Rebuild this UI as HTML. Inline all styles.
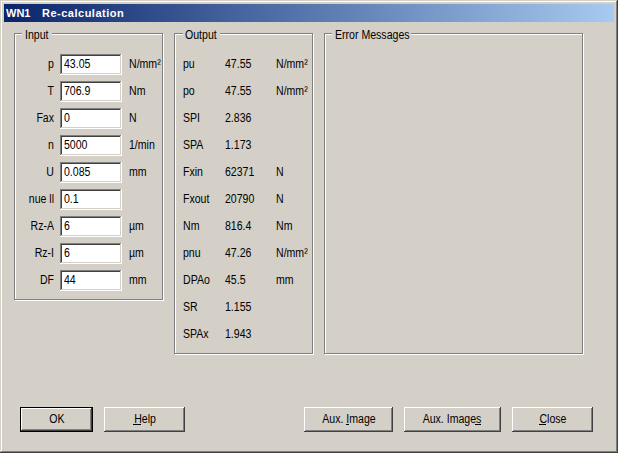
<!DOCTYPE html>
<html><head><meta charset="utf-8">
<style>
*{box-sizing:border-box;margin:0;padding:0}
html,body{width:618px;height:453px;overflow:hidden;background:#d4d0c8}
body{position:relative;font-family:"Liberation Sans",sans-serif;font-size:12px;color:#000}
.a{position:absolute}
.t{position:absolute;white-space:nowrap;line-height:13px;height:13px;transform:scaleX(0.88);transform-origin:0 0}
.tr{text-align:right;transform-origin:100% 0}
.tc{text-align:center;transform-origin:50% 0}
.tb{position:absolute;white-space:nowrap;line-height:13px;height:13px;color:#fff;font-weight:bold;font-size:11px}
.title{left:4px;top:4px;width:610px;height:18px;background:linear-gradient(to right,#0a246a,#a6caf0)}
.gw{border:1px solid #fff}
.gg{border:1px solid #808080}
</style></head><body>
<div class="a" style="left:0px;top:0px;width:617px;height:1px;background:#d4d0c8"></div><div class="a" style="left:0px;top:0px;width:1px;height:452px;background:#d4d0c8"></div><div class="a" style="left:0px;top:452px;width:618px;height:1px;background:#404040"></div><div class="a" style="left:617px;top:0px;width:1px;height:453px;background:#404040"></div>
<div class="a" style="left:1px;top:1px;width:615px;height:1px;background:#fff"></div><div class="a" style="left:1px;top:1px;width:1px;height:450px;background:#fff"></div><div class="a" style="left:1px;top:451px;width:616px;height:1px;background:#808080"></div><div class="a" style="left:616px;top:1px;width:1px;height:451px;background:#808080"></div>
<div class="a title"></div>
<div class="a gw" style="left:15px;top:34px;width:149px;height:267px"></div><div class="a gg" style="left:14px;top:33px;width:149px;height:267px"></div>
<div class="a" style="left:22px;top:28px;width:30px;height:13px;background:#d4d0c8"></div>
<div class="a gw" style="left:175px;top:34px;width:139px;height:321px"></div><div class="a gg" style="left:174px;top:33px;width:139px;height:321px"></div>
<div class="a" style="left:183px;top:28px;width:37px;height:13px;background:#d4d0c8"></div>
<div class="a gw" style="left:325px;top:34px;width:259px;height:321px"></div><div class="a gg" style="left:324px;top:33px;width:259px;height:321px"></div>
<div class="a" style="left:332px;top:28px;width:79px;height:13px;background:#d4d0c8"></div>
<div class="a" style="left:62px;top:56px;width:58px;height:17px;background:#fff"></div><div class="a" style="left:60px;top:54px;width:61px;height:1px;background:#808080"></div><div class="a" style="left:60px;top:54px;width:1px;height:20px;background:#808080"></div><div class="a" style="left:60px;top:74px;width:62px;height:1px;background:#fff"></div><div class="a" style="left:121px;top:54px;width:1px;height:21px;background:#fff"></div><div class="a" style="left:61px;top:55px;width:59px;height:1px;background:#404040"></div><div class="a" style="left:61px;top:55px;width:1px;height:18px;background:#404040"></div><div class="a" style="left:61px;top:73px;width:60px;height:1px;background:#d4d0c8"></div><div class="a" style="left:120px;top:55px;width:1px;height:19px;background:#d4d0c8"></div>
<div class="a" style="left:62px;top:83px;width:58px;height:17px;background:#fff"></div><div class="a" style="left:60px;top:81px;width:61px;height:1px;background:#808080"></div><div class="a" style="left:60px;top:81px;width:1px;height:20px;background:#808080"></div><div class="a" style="left:60px;top:101px;width:62px;height:1px;background:#fff"></div><div class="a" style="left:121px;top:81px;width:1px;height:21px;background:#fff"></div><div class="a" style="left:61px;top:82px;width:59px;height:1px;background:#404040"></div><div class="a" style="left:61px;top:82px;width:1px;height:18px;background:#404040"></div><div class="a" style="left:61px;top:100px;width:60px;height:1px;background:#d4d0c8"></div><div class="a" style="left:120px;top:82px;width:1px;height:19px;background:#d4d0c8"></div>
<div class="a" style="left:62px;top:110px;width:58px;height:17px;background:#fff"></div><div class="a" style="left:60px;top:108px;width:61px;height:1px;background:#808080"></div><div class="a" style="left:60px;top:108px;width:1px;height:20px;background:#808080"></div><div class="a" style="left:60px;top:128px;width:62px;height:1px;background:#fff"></div><div class="a" style="left:121px;top:108px;width:1px;height:21px;background:#fff"></div><div class="a" style="left:61px;top:109px;width:59px;height:1px;background:#404040"></div><div class="a" style="left:61px;top:109px;width:1px;height:18px;background:#404040"></div><div class="a" style="left:61px;top:127px;width:60px;height:1px;background:#d4d0c8"></div><div class="a" style="left:120px;top:109px;width:1px;height:19px;background:#d4d0c8"></div>
<div class="a" style="left:62px;top:137px;width:58px;height:17px;background:#fff"></div><div class="a" style="left:60px;top:135px;width:61px;height:1px;background:#808080"></div><div class="a" style="left:60px;top:135px;width:1px;height:20px;background:#808080"></div><div class="a" style="left:60px;top:155px;width:62px;height:1px;background:#fff"></div><div class="a" style="left:121px;top:135px;width:1px;height:21px;background:#fff"></div><div class="a" style="left:61px;top:136px;width:59px;height:1px;background:#404040"></div><div class="a" style="left:61px;top:136px;width:1px;height:18px;background:#404040"></div><div class="a" style="left:61px;top:154px;width:60px;height:1px;background:#d4d0c8"></div><div class="a" style="left:120px;top:136px;width:1px;height:19px;background:#d4d0c8"></div>
<div class="a" style="left:62px;top:164px;width:58px;height:17px;background:#fff"></div><div class="a" style="left:60px;top:162px;width:61px;height:1px;background:#808080"></div><div class="a" style="left:60px;top:162px;width:1px;height:20px;background:#808080"></div><div class="a" style="left:60px;top:182px;width:62px;height:1px;background:#fff"></div><div class="a" style="left:121px;top:162px;width:1px;height:21px;background:#fff"></div><div class="a" style="left:61px;top:163px;width:59px;height:1px;background:#404040"></div><div class="a" style="left:61px;top:163px;width:1px;height:18px;background:#404040"></div><div class="a" style="left:61px;top:181px;width:60px;height:1px;background:#d4d0c8"></div><div class="a" style="left:120px;top:163px;width:1px;height:19px;background:#d4d0c8"></div>
<div class="a" style="left:62px;top:191px;width:58px;height:17px;background:#fff"></div><div class="a" style="left:60px;top:189px;width:61px;height:1px;background:#808080"></div><div class="a" style="left:60px;top:189px;width:1px;height:20px;background:#808080"></div><div class="a" style="left:60px;top:209px;width:62px;height:1px;background:#fff"></div><div class="a" style="left:121px;top:189px;width:1px;height:21px;background:#fff"></div><div class="a" style="left:61px;top:190px;width:59px;height:1px;background:#404040"></div><div class="a" style="left:61px;top:190px;width:1px;height:18px;background:#404040"></div><div class="a" style="left:61px;top:208px;width:60px;height:1px;background:#d4d0c8"></div><div class="a" style="left:120px;top:190px;width:1px;height:19px;background:#d4d0c8"></div>
<div class="a" style="left:62px;top:218px;width:58px;height:17px;background:#fff"></div><div class="a" style="left:60px;top:216px;width:61px;height:1px;background:#808080"></div><div class="a" style="left:60px;top:216px;width:1px;height:20px;background:#808080"></div><div class="a" style="left:60px;top:236px;width:62px;height:1px;background:#fff"></div><div class="a" style="left:121px;top:216px;width:1px;height:21px;background:#fff"></div><div class="a" style="left:61px;top:217px;width:59px;height:1px;background:#404040"></div><div class="a" style="left:61px;top:217px;width:1px;height:18px;background:#404040"></div><div class="a" style="left:61px;top:235px;width:60px;height:1px;background:#d4d0c8"></div><div class="a" style="left:120px;top:217px;width:1px;height:19px;background:#d4d0c8"></div>
<div class="a" style="left:62px;top:245px;width:58px;height:17px;background:#fff"></div><div class="a" style="left:60px;top:243px;width:61px;height:1px;background:#808080"></div><div class="a" style="left:60px;top:243px;width:1px;height:20px;background:#808080"></div><div class="a" style="left:60px;top:263px;width:62px;height:1px;background:#fff"></div><div class="a" style="left:121px;top:243px;width:1px;height:21px;background:#fff"></div><div class="a" style="left:61px;top:244px;width:59px;height:1px;background:#404040"></div><div class="a" style="left:61px;top:244px;width:1px;height:18px;background:#404040"></div><div class="a" style="left:61px;top:262px;width:60px;height:1px;background:#d4d0c8"></div><div class="a" style="left:120px;top:244px;width:1px;height:19px;background:#d4d0c8"></div>
<div class="a" style="left:62px;top:272px;width:58px;height:17px;background:#fff"></div><div class="a" style="left:60px;top:270px;width:61px;height:1px;background:#808080"></div><div class="a" style="left:60px;top:270px;width:1px;height:20px;background:#808080"></div><div class="a" style="left:60px;top:290px;width:62px;height:1px;background:#fff"></div><div class="a" style="left:121px;top:270px;width:1px;height:21px;background:#fff"></div><div class="a" style="left:61px;top:271px;width:59px;height:1px;background:#404040"></div><div class="a" style="left:61px;top:271px;width:1px;height:18px;background:#404040"></div><div class="a" style="left:61px;top:289px;width:60px;height:1px;background:#d4d0c8"></div><div class="a" style="left:120px;top:271px;width:1px;height:19px;background:#d4d0c8"></div>
<div class="a" style="left:20px;top:407px;width:72px;height:1px;background:#000"></div><div class="a" style="left:20px;top:407px;width:1px;height:24px;background:#000"></div><div class="a" style="left:20px;top:431px;width:73px;height:1px;background:#000"></div><div class="a" style="left:92px;top:407px;width:1px;height:25px;background:#000"></div><div class="a" style="left:21px;top:408px;width:70px;height:1px;background:#fff"></div><div class="a" style="left:21px;top:408px;width:1px;height:22px;background:#fff"></div><div class="a" style="left:21px;top:430px;width:71px;height:1px;background:#404040"></div><div class="a" style="left:91px;top:408px;width:1px;height:23px;background:#404040"></div><div class="a" style="left:22px;top:409px;width:68px;height:1px;background:#d4d0c8"></div><div class="a" style="left:22px;top:409px;width:1px;height:20px;background:#d4d0c8"></div><div class="a" style="left:22px;top:429px;width:69px;height:1px;background:#808080"></div><div class="a" style="left:90px;top:409px;width:1px;height:21px;background:#808080"></div>
<div class="a" style="left:104px;top:407px;width:80px;height:1px;background:#fff"></div><div class="a" style="left:104px;top:407px;width:1px;height:24px;background:#fff"></div><div class="a" style="left:104px;top:431px;width:81px;height:1px;background:#404040"></div><div class="a" style="left:184px;top:407px;width:1px;height:25px;background:#404040"></div><div class="a" style="left:105px;top:408px;width:78px;height:1px;background:#d4d0c8"></div><div class="a" style="left:105px;top:408px;width:1px;height:22px;background:#d4d0c8"></div><div class="a" style="left:105px;top:430px;width:79px;height:1px;background:#808080"></div><div class="a" style="left:183px;top:408px;width:1px;height:23px;background:#808080"></div>
<div class="a" style="left:133px;top:424px;width:8px;height:1px;background:#000"></div>
<div class="a" style="left:304px;top:407px;width:88px;height:1px;background:#fff"></div><div class="a" style="left:304px;top:407px;width:1px;height:24px;background:#fff"></div><div class="a" style="left:304px;top:431px;width:89px;height:1px;background:#404040"></div><div class="a" style="left:392px;top:407px;width:1px;height:25px;background:#404040"></div><div class="a" style="left:305px;top:408px;width:86px;height:1px;background:#d4d0c8"></div><div class="a" style="left:305px;top:408px;width:1px;height:22px;background:#d4d0c8"></div><div class="a" style="left:305px;top:430px;width:87px;height:1px;background:#808080"></div><div class="a" style="left:391px;top:408px;width:1px;height:23px;background:#808080"></div>
<div class="a" style="left:346px;top:424px;width:3px;height:1px;background:#000"></div>
<div class="a" style="left:404px;top:407px;width:96px;height:1px;background:#fff"></div><div class="a" style="left:404px;top:407px;width:1px;height:24px;background:#fff"></div><div class="a" style="left:404px;top:431px;width:97px;height:1px;background:#404040"></div><div class="a" style="left:500px;top:407px;width:1px;height:25px;background:#404040"></div><div class="a" style="left:405px;top:408px;width:94px;height:1px;background:#d4d0c8"></div><div class="a" style="left:405px;top:408px;width:1px;height:22px;background:#d4d0c8"></div><div class="a" style="left:405px;top:430px;width:95px;height:1px;background:#808080"></div><div class="a" style="left:499px;top:408px;width:1px;height:23px;background:#808080"></div>
<div class="a" style="left:475px;top:424px;width:6px;height:1px;background:#000"></div>
<div class="a" style="left:512px;top:407px;width:80px;height:1px;background:#fff"></div><div class="a" style="left:512px;top:407px;width:1px;height:24px;background:#fff"></div><div class="a" style="left:512px;top:431px;width:81px;height:1px;background:#404040"></div><div class="a" style="left:592px;top:407px;width:1px;height:25px;background:#404040"></div><div class="a" style="left:513px;top:408px;width:78px;height:1px;background:#d4d0c8"></div><div class="a" style="left:513px;top:408px;width:1px;height:22px;background:#d4d0c8"></div><div class="a" style="left:513px;top:430px;width:79px;height:1px;background:#808080"></div><div class="a" style="left:591px;top:408px;width:1px;height:23px;background:#808080"></div>
<div class="a" style="left:539px;top:424px;width:7px;height:1px;background:#000"></div>
<div class="tb" style="left:6px;top:7px">WN1</div>
<div class="tb" style="left:42px;top:7px;letter-spacing:0.5px">Re-calculation</div>
<div class="t " style="left:25px;top:29px;">Input</div>
<div class="t " style="left:184.5px;top:29px;">Output</div>
<div class="t " style="left:335.3px;top:29px;">Error Messages</div>
<div class="t tr " style="left:-146px;top:58px;width:200px;">p</div>
<div class="t " style="left:64px;top:58px;">43.05</div>
<div class="t " style="left:129px;top:58px;">N/mm²</div>
<div class="t tr " style="left:-146px;top:85px;width:200px;">T</div>
<div class="t " style="left:64px;top:85px;">706.9</div>
<div class="t " style="left:129px;top:85px;">Nm</div>
<div class="t tr " style="left:-146px;top:112px;width:200px;">Fax</div>
<div class="t " style="left:64px;top:112px;">0</div>
<div class="t " style="left:129px;top:112px;">N</div>
<div class="t tr " style="left:-146px;top:139px;width:200px;">n</div>
<div class="t " style="left:64px;top:139px;">5000</div>
<div class="t " style="left:129px;top:139px;">1/min</div>
<div class="t tr " style="left:-146px;top:166px;width:200px;">U</div>
<div class="t " style="left:64px;top:166px;">0.085</div>
<div class="t " style="left:129px;top:166px;">mm</div>
<div class="t tr " style="left:-146px;top:193px;width:200px;">nue ll</div>
<div class="t " style="left:64px;top:193px;">0.1</div>
<div class="t tr " style="left:-146px;top:220px;width:200px;">Rz-A</div>
<div class="t " style="left:64px;top:220px;">6</div>
<div class="t " style="left:129px;top:220px;">µm</div>
<div class="t tr " style="left:-146px;top:247px;width:200px;">Rz-I</div>
<div class="t " style="left:64px;top:247px;">6</div>
<div class="t " style="left:129px;top:247px;">µm</div>
<div class="t tr " style="left:-146px;top:274px;width:200px;">DF</div>
<div class="t " style="left:64px;top:274px;">44</div>
<div class="t " style="left:129px;top:274px;">mm</div>
<div class="t " style="left:182.5px;top:58px;">pu</div>
<div class="t " style="left:225px;top:58px;">47.55</div>
<div class="t " style="left:276px;top:58px;">N/mm²</div>
<div class="t " style="left:182.5px;top:85px;">po</div>
<div class="t " style="left:225px;top:85px;">47.55</div>
<div class="t " style="left:276px;top:85px;">N/mm²</div>
<div class="t " style="left:182.5px;top:112px;">SPI</div>
<div class="t " style="left:225px;top:112px;">2.836</div>
<div class="t " style="left:182.5px;top:139px;">SPA</div>
<div class="t " style="left:225px;top:139px;">1.173</div>
<div class="t " style="left:182.5px;top:166px;">Fxin</div>
<div class="t " style="left:225px;top:166px;">62371</div>
<div class="t " style="left:276px;top:166px;">N</div>
<div class="t " style="left:182.5px;top:193px;">Fxout</div>
<div class="t " style="left:225px;top:193px;">20790</div>
<div class="t " style="left:276px;top:193px;">N</div>
<div class="t " style="left:182.5px;top:220px;">Nm</div>
<div class="t " style="left:225px;top:220px;">816.4</div>
<div class="t " style="left:276px;top:220px;">Nm</div>
<div class="t " style="left:182.5px;top:247px;">pnu</div>
<div class="t " style="left:225px;top:247px;">47.26</div>
<div class="t " style="left:276px;top:247px;">N/mm²</div>
<div class="t " style="left:182.5px;top:274px;">DPAo</div>
<div class="t " style="left:225px;top:274px;">45.5</div>
<div class="t " style="left:276px;top:274px;">mm</div>
<div class="t " style="left:182.5px;top:301px;">SR</div>
<div class="t " style="left:225px;top:301px;">1.155</div>
<div class="t " style="left:182.5px;top:328px;">SPAx</div>
<div class="t " style="left:225px;top:328px;">1.943</div>
<div class="t tc " style="left:-43.5px;top:413px;width:200px;">OK</div>
<div class="t tc " style="left:44.5px;top:413px;width:200px;">Help</div>
<div class="t tc " style="left:248.5px;top:413px;width:200px;">Aux. Image</div>
<div class="t tc " style="left:352px;top:413px;width:200px;">Aux. Images</div>
<div class="t tc " style="left:452.5px;top:413px;width:200px;">Close</div>
</body></html>
